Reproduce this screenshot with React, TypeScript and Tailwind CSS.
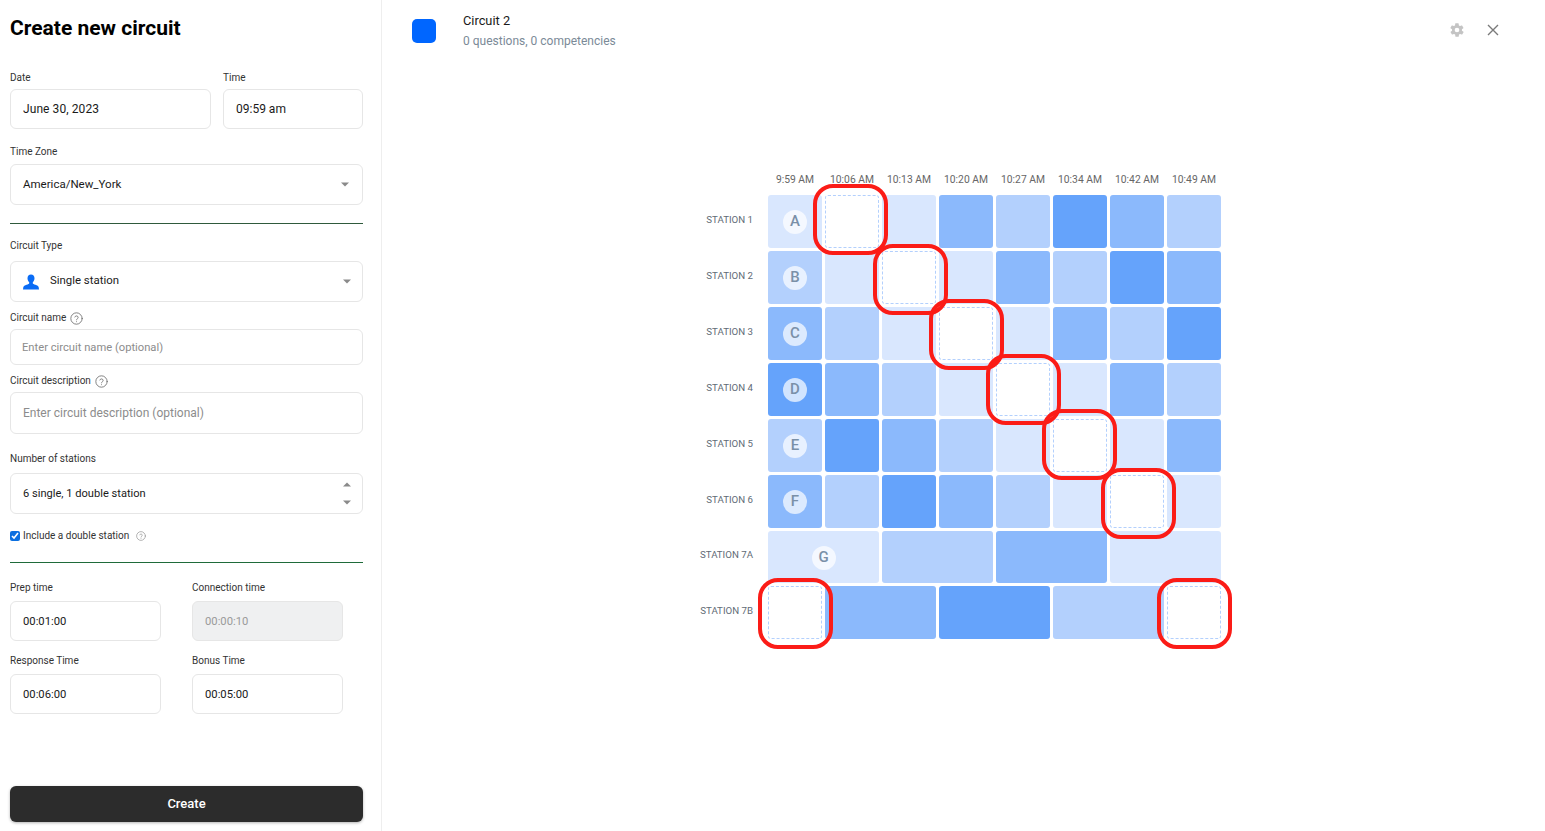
import React from "react";

const L1 = "bg-[#d9e7fe]";
const L2 = "bg-[#b3d0fd]";
const L3 = "bg-[#8bb9fc]";
const L4 = "bg-[#65a3fb]";
const EMPTY = "bg-white border border-dashed border-[#b3d0fd]";

const times = ["9:59 AM", "10:06 AM", "10:13 AM", "10:20 AM", "10:27 AM", "10:34 AM", "10:42 AM", "10:49 AM"];
const stations = ["STATION 1", "STATION 2", "STATION 3", "STATION 4", "STATION 5", "STATION 6", "STATION 7A", "STATION 7B"];

const singleRows: { letter: string; cells: string[] }[] = [
  { letter: "A", cells: [L1, EMPTY, L1, L3, L2, L4, L3, L2] },
  { letter: "B", cells: [L2, L1, EMPTY, L1, L3, L2, L4, L3] },
  { letter: "C", cells: [L3, L2, L1, EMPTY, L1, L3, L2, L4] },
  { letter: "D", cells: [L4, L3, L2, L1, EMPTY, L1, L3, L2] },
  { letter: "E", cells: [L2, L4, L3, L2, L1, EMPTY, L1, L3] },
  { letter: "F", cells: [L3, L2, L4, L3, L2, L1, EMPTY, L1] },
];

const rings = [
  "left-[45px] top-[-11px]",
  "left-[105px] top-[49px]",
  "left-[161px] top-[104px]",
  "left-[218px] top-[159px]",
  "left-[274px] top-[214px]",
  "left-[333px] top-[273px]",
  "left-[-10px] top-[383px]",
  "left-[389px] top-[383px]",
];

const labelCls = "block h-[12px] text-[10px] leading-[14px] text-[#333]";
const boxCls = "block w-full rounded-md border border-[#e6e6e6] px-[12px] text-[#1a1a1a] outline-none placeholder:text-[#8c8c8c]";

function Caret({ up = false }: { up?: boolean }) {
  return (
    <svg width="8" height="5" viewBox="0 0 8 5" className={up ? "rotate-180" : ""}>
      <path d="M0 0.5h8L4 4.5z" fill="#8a8a8a" />
    </svg>
  );
}

function Help({ size = 13, color = "#6f6f6f" }: { size?: number; color?: string }) {
  return (
    <svg width={size} height={size} viewBox="0 0 24 24" fill="none" stroke={color} strokeWidth="1.6" strokeLinecap="round" strokeLinejoin="round">
      <circle cx="12" cy="12" r="10.5" />
      <path d="M9 9.2a3.1 3.1 0 0 1 6 .9c0 2-3 2.6-3 4.4" />
      <path d="M12 17.8h.01" />
    </svg>
  );
}

function Person() {
  return (
    <svg width="16" height="16" viewBox="0 0 16 16" fill="#0a6cf5">
      <path d="M8 0.5c2.2 0 3.5 1.6 3.5 3.8 0 1.6-.8 3.1-1.7 3.9v1c0 .7 1.2 1 2.6 1.5 1.8.7 3.1 1.3 3.3 2.5l.3 2.3H0l.3-2.3c.2-1.2 1.5-1.8 3.3-2.5 1.4-.5 2.6-.8 2.6-1.5v-1c-.9-.8-1.7-2.3-1.7-3.9C4.5 2.1 5.8.5 8 .5z" />
    </svg>
  );
}

function Badge({ letter, className = "" }: { letter: string; className?: string }) {
  return (
    <span className={`flex h-[24px] w-[24px] items-center justify-center rounded-full bg-white/70 text-[15px] font-medium text-[#7a90a8] ${className}`}>
      {letter}
    </span>
  );
}

function TextField({ value, disabled = false, size = "text-[11.25px]" }: { value: string; disabled?: boolean; size?: string }) {
  return (
    <input
      readOnly
      value={value}
      className={`${boxCls} h-[40px] ${size} ${disabled ? "bg-[#eff0f1] !text-[#9a9a9a]" : "bg-white"}`}
    />
  );
}

export default function App() {
  return (
    <div className="flex h-[831px] w-[1545px] overflow-hidden bg-white font-['Roboto',sans-serif]">
      <aside className="flex h-full w-[382px] shrink-0 flex-col border-r border-[#eeeeee] pl-[10px] pr-[18px] pb-[9px]">
        <h1 className="mt-[14px] text-[21px] font-bold leading-[28px] text-black">Create new circuit</h1>

        <div className="mt-[29px] grid grid-cols-[201px_140px] gap-x-[12px]">
          <div>
            <label className={labelCls}>Date</label>
            <div className="mt-[6px]"><TextField value="June 30, 2023" size="text-[12px] tracking-[0.08px]" /></div>
          </div>
          <div>
            <label className={labelCls}>Time</label>
            <div className="mt-[6px]"><TextField value="09:59 am" size="text-[12px]" /></div>
          </div>
        </div>

        <label className={`${labelCls} mt-[16px]`}>Time Zone</label>
        <div className={`${boxCls} mt-[7px] flex h-[41px] items-center justify-between bg-white pr-[13px] text-[11.5px]`}>
          <span>America/New_York</span>
          <Caret />
        </div>

        <div className="mt-[18px] h-px bg-[#2f5a3c]" />

        <label className={`${labelCls} mt-[15px]`}>Circuit Type</label>
        <div className={`${boxCls} mt-[10px] flex h-[41px] items-center justify-between bg-white pr-[11px] text-[11.4px]`}>
          <span className="flex items-center gap-[11px]"><Person /><span className="-mt-[2px]">Single station</span></span>
          <Caret />
        </div>

        <label className={`${labelCls} mt-[9px] flex items-center gap-[4px] pt-[2px]`}>Circuit name <Help /></label>
        <input readOnly placeholder="Enter circuit name (optional)" className={`${boxCls} mt-[6px] h-[36px] bg-white !px-[11px] text-[11.2px]`} />

        <label className={`${labelCls} mt-[9px] flex items-center gap-[4px] pt-[2px]`}>Circuit description <Help /></label>
        <input readOnly placeholder="Enter circuit description (optional)" className={`${boxCls} mt-[6px] h-[42px] bg-white text-[12px]`} />

        <label className={`${labelCls} mt-[18px]`}>Number of stations</label>
        <div className={`${boxCls} mt-[9px] flex h-[41px] items-center justify-between bg-white pr-[11px] text-[11.1px]`}>
          <span className="mt-[1px]">6 single, 1 double station</span>
          <span className="flex flex-col gap-[13px]"><Caret up /><Caret /></span>
        </div>

        <label className={`${labelCls} mt-[15px] flex items-center pt-[2px]`}>
          <input type="checkbox" checked readOnly className="m-0 mr-[3px] h-[10px] w-[10px] accent-[#0b6fe0]" />
          Include a double station
          <span className="ml-[7px]"><Help size={10} color="#8f8f8f" /></span>
        </label>

        <div className="mt-[21px] h-px bg-[#1f6b3a]" />

        <div className="mt-[18px] grid grid-cols-[151px_151px] gap-x-[31px]">
          <div>
            <label className={labelCls}>Prep time</label>
            <div className="mt-[8px]"><TextField value="00:01:00" /></div>
          </div>
          <div>
            <label className={labelCls}>Connection time</label>
            <div className="mt-[8px]"><TextField value="00:00:10" disabled /></div>
          </div>
          <div className="mt-[13px]">
            <label className={labelCls}>Response Time</label>
            <div className="mt-[8px]"><TextField value="00:06:00" /></div>
          </div>
          <div className="mt-[13px]">
            <label className={labelCls}>Bonus Time</label>
            <div className="mt-[8px]"><TextField value="00:05:00" /></div>
          </div>
        </div>

        <button className="mt-auto h-[36px] w-full rounded-md bg-[#2c2c2c] text-[13px] font-medium text-white shadow-[0_1px_3px_rgba(0,0,0,0.3)]">
          Create
        </button>
      </aside>

      <main className="flex min-w-0 flex-1 flex-col">
        <header className="flex h-[60px] items-start pl-[30px] pr-[44px]">
          <div className="mt-[19px] h-[24px] w-[24px] rounded-[5px] bg-[#0066ff]" />
          <div className="ml-[27px] mt-[12px]">
            <div className="text-[12.8px] leading-[17px] text-[#1a1a1a]">Circuit 2</div>
            <div className="mt-[4px] text-[12px] leading-[16px] text-[#7b8a97]">0 questions, 0 competencies</div>
          </div>
          <div className="ml-auto mt-[22px] flex items-center gap-[20px]">
            <svg width="16" height="16" viewBox="0 0 24 24" fill="#c4c4c4">
              <path fillRule="evenodd" d="M19.4 13a7.6 7.6 0 0 0 0-2l2.1-1.6a.5.5 0 0 0 .1-.6l-2-3.5a.5.5 0 0 0-.6-.2l-2.5 1a7.3 7.3 0 0 0-1.7-1l-.4-2.7a.5.5 0 0 0-.5-.4h-4a.5.5 0 0 0-.5.4l-.4 2.7a7.3 7.3 0 0 0-1.7 1l-2.5-1a.5.5 0 0 0-.6.2l-2 3.5a.5.5 0 0 0 .1.6L4.6 11a7.6 7.6 0 0 0 0 2l-2.1 1.6a.5.5 0 0 0-.1.6l2 3.5c.1.2.4.3.6.2l2.5-1c.5.4 1.1.7 1.7 1l.4 2.7c0 .2.2.4.5.4h4c.3 0 .5-.2.5-.4l.4-2.7c.6-.3 1.2-.6 1.7-1l2.5 1c.2.1.5 0 .6-.2l2-3.5a.5.5 0 0 0-.1-.6zM12 15.5a3.5 3.5 0 1 1 0-7 3.5 3.5 0 0 1 0 7z" />
            </svg>
            <svg width="16" height="16" viewBox="0 0 16 16" fill="none" stroke="#7a7a7a" strokeWidth="1.4">
              <path d="M3 3l10 10M13 3L3 13" />
            </svg>
          </div>
        </header>

        <section className="ml-[298px] mt-[113px] flex">
          <div className="w-[88px] pt-[22px]">
            <div className="grid grid-rows-[repeat(6,53px)_52px_53px] gap-y-[3px]">
              {stations.map((s) => (
                <div key={s} className="flex items-center justify-end whitespace-nowrap pb-[4px] pr-[15px] text-[9.7px] leading-[12px] text-[#5f6b76]">
                  {s}
                </div>
              ))}
            </div>
          </div>

          <div className="w-[453px]">
            <div className="grid h-[22px] grid-cols-[repeat(8,54px)] gap-x-[3px]">
              {times.map((t) => (
                <div key={t} className="whitespace-nowrap pt-[1px] text-center text-[10.3px] leading-[12px] text-[#666]">
                  {t}
                </div>
              ))}
            </div>
            <div className="relative">
              <div className="grid grid-cols-[repeat(8,54px)] grid-rows-[repeat(6,53px)_52px_53px] gap-x-[3px] gap-y-[3px]">
                {singleRows.map((r) =>
                  r.cells.map((c, i) => (
                    <div key={r.letter + i} className={`flex items-center justify-center rounded-[3px] ${c}`}>
                      {i === 0 && <Badge letter={r.letter} className="mt-[1px] pb-[2px]" />}
                    </div>
                  ))
                )}
                <div className={`col-span-2 flex items-center justify-center rounded-[3px] ${L1}`}>
                  <Badge letter="G" className="mt-[1px]" />
                </div>
                <div className={`col-span-2 rounded-[3px] ${L2}`} />
                <div className={`col-span-2 rounded-[3px] ${L3}`} />
                <div className={`col-span-2 rounded-[3px] ${L1}`} />
                <div className={`rounded-[3px] ${EMPTY}`} />
                <div className={`col-span-2 rounded-[3px] ${L3}`} />
                <div className={`col-span-2 rounded-[3px] ${L4}`} />
                <div className={`col-span-2 rounded-[3px] ${L2}`} />
                <div className={`rounded-[3px] ${EMPTY}`} />
              </div>
              {rings.map((r) => (
                <div key={r} className={`pointer-events-none absolute h-[71px] w-[75px] rounded-[20px] border-[4px] border-[#fb1c17] ${r}`} />
              ))}
            </div>
          </div>
        </section>
      </main>
    </div>
  );
}
